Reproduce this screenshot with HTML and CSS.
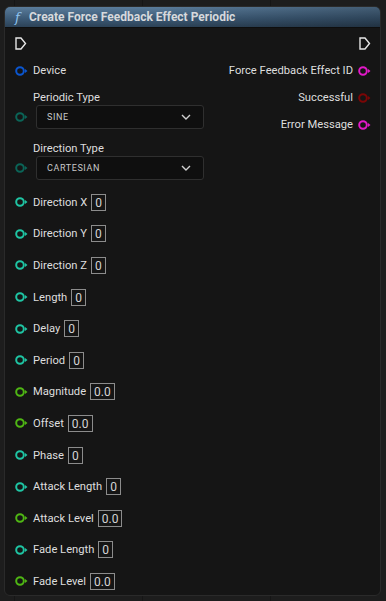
FILE: index.html
```html
<!DOCTYPE html>
<html lang="en">
<head>
    <meta charset="UTF-8">
    <meta name="viewport" content="width=device-width, initial-scale=1.0">
    <title>Create Force Feedback Effect Periodic</title>
    <link rel="stylesheet" href="styles.css">
</head>
<body>
    <div class="node">
        <div class="node-header">
            <span class="fn-icon">f</span>
            <span class="node-title">Create Force Feedback Effect Periodic</span>
        </div>

        <div class="node-body">
            <div class="inputs">
                <div class="pin-row">
                    <svg class="exec" width="12" height="13" viewBox="0 0 12 13"><path d="M1 1 H6 L10.5 6.5 L6 12 H1 Z" fill="none" stroke="#e6e6e6" stroke-width="1.4"/></svg>
                </div>
                <div class="pin-row">
                    <svg class="pin pin-device" width="13" height="10" viewBox="0 0 13 10"><circle cx="5" cy="5" r="3.8" /><path d="M10 3 L12.5 5 L10 7 Z" /></svg>
                    <span class="label">Device</span>
                </div>

                <div class="enum-block">
                    <div class="enum-label">Periodic Type</div>
                    <div class="enum-row">
                        <svg class="pin pin-enum" width="13" height="10" viewBox="0 0 13 10"><circle cx="5" cy="5" r="3.8" /><path d="M10 3 L12.5 5 L10 7 Z" /></svg>
                        <div class="dropdown">
                            <span>SINE</span>
                            <svg width="10" height="6" viewBox="0 0 10 6"><path d="M1 1 L5 5 L9 1" fill="none" stroke="#d0d0d0" stroke-width="1.4"/></svg>
                        </div>
                    </div>
                </div>

                <div class="enum-block second">
                    <div class="enum-label">Direction Type</div>
                    <div class="enum-row">
                        <svg class="pin pin-enum" width="13" height="10" viewBox="0 0 13 10"><circle cx="5" cy="5" r="3.8" /><path d="M10 3 L12.5 5 L10 7 Z" /></svg>
                        <div class="dropdown">
                            <span>CARTESIAN</span>
                            <svg width="10" height="6" viewBox="0 0 10 6"><path d="M1 1 L5 5 L9 1" fill="none" stroke="#d0d0d0" stroke-width="1.4"/></svg>
                        </div>
                    </div>
                </div>

                <div class="value-list" id="valueList"></div>
            </div>

            <div class="outputs">
                <div class="pin-row right">
                    <svg class="exec" width="12" height="13" viewBox="0 0 12 13"><path d="M1 1 H6 L10.5 6.5 L6 12 H1 Z" fill="none" stroke="#e6e6e6" stroke-width="1.4"/></svg>
                </div>
                <div class="pin-row right">
                    <span class="label">Force Feedback Effect ID</span>
                    <svg class="pin pin-string" width="13" height="10" viewBox="0 0 13 10"><circle cx="5" cy="5" r="3.8" /><path d="M10 3 L12.5 5 L10 7 Z" /></svg>
                </div>
                <div class="pin-row right">
                    <span class="label">Successful</span>
                    <svg class="pin pin-bool" width="13" height="10" viewBox="0 0 13 10"><circle cx="5" cy="5" r="3.8" /><path d="M10 3 L12.5 5 L10 7 Z" /></svg>
                </div>
                <div class="pin-row right">
                    <span class="label">Error Message</span>
                    <svg class="pin pin-string" width="13" height="10" viewBox="0 0 13 10"><circle cx="5" cy="5" r="3.8" /><path d="M10 3 L12.5 5 L10 7 Z" /></svg>
                </div>
            </div>
        </div>
    </div>

    <script>
        // Input pins with default values
        const inputs = [
            ['Direction X', '0', 'int'],
            ['Direction Y', '0', 'int'],
            ['Direction Z', '0', 'int'],
            ['Length', '0', 'int'],
            ['Delay', '0', 'int'],
            ['Period', '0', 'int'],
            ['Magnitude', '0.0', 'float'],
            ['Offset', '0.0', 'float'],
            ['Phase', '0', 'int'],
            ['Attack Length', '0', 'int'],
            ['Attack Level', '0.0', 'float'],
            ['Fade Length', '0', 'int'],
            ['Fade Level', '0.0', 'float']
        ];

        const list = document.getElementById('valueList');
        inputs.forEach(([name, value, type]) => {
            const row = document.createElement('div');
            row.className = 'value-row';
            row.innerHTML =
                '<svg class="pin pin-' + type + '" width="13" height="10" viewBox="0 0 13 10">' +
                '<circle cx="5" cy="5" r="3.8" /><path d="M10 3 L12.5 5 L10 7 Z" /></svg>' +
                '<span class="label">' + name + '</span>' +
                '<span class="value-box">' + value + '</span>';
            list.appendChild(row);
        });
    </script>
</body>
</html>
```

FILE: styles.css
```css
body {
    margin: 0;
    width: 386px;
    height: 601px;
    overflow: hidden;
    background-color: #1d1d1d;
    background-image:
        linear-gradient(to right, #161616 1px, transparent 1px);
    background-size: 128px 100%;
    background-position: 14px 0;
    font-family: Roboto, "Noto Sans", sans-serif;
    color: #dcdcdc;
}
.node {
    margin: 6px 0 0 4px;
    width: 377px;
    height: 590px;
    background: #151515;
    border: 1px solid #2a2a2a;
    border-radius: 6px;
    overflow: hidden;
    box-sizing: border-box;
}
.node-header {
    height: 20px;
    display: flex;
    align-items: center;
    padding-left: 10px;
    background:
        linear-gradient(to right, rgba(0, 0, 0, 0) 40%, rgba(0, 0, 0, 0.25) 100%),
        linear-gradient(to bottom, #5a7c9b 0%, #3d5b77 55%, #2c4257 100%);
    border-bottom: 1px solid #0e0e0e;
}
.fn-icon {
    font-family: "DejaVu Serif", serif;
    font-style: italic;
    font-size: 13px;
    color: #8fc3ef;
    width: 14px;
}
.node-title {
    font-weight: bold;
    font-size: 12px;
    color: #d6d9dc;
}
.node-body {
    display: flex;
    justify-content: space-between;
    padding: 2px 9px 0 10px;
}
.inputs {
    display: flex;
    flex-direction: column;
}
.outputs {
    display: flex;
    flex-direction: column;
    align-items: flex-end;
}
.pin-row {
    height: 27px;
    display: flex;
    align-items: center;
    gap: 5px;
}
.label {
    font-size: 11.2px;
    color: #dedede;
}
.exec {
    display: block;
}
.pin {
    display: block;
    flex: none;
}
.pin circle {
    fill: none;
    stroke-width: 2;
}
.pin-device circle { stroke: #0b56d0; }
.pin-device path { fill: #0b56d0; }
.pin-enum circle { stroke: #0b6457; }
.pin-enum path { fill: #0b6457; }
.pin-int circle { stroke: #1fc4a3; }
.pin-int path { fill: #1fc4a3; }
.pin-float circle { stroke: #4fb614; }
.pin-float path { fill: #4fb614; }
.pin-string circle { stroke: #e219c8; }
.pin-string path { fill: #e219c8; }
.pin-bool circle { stroke: #7a0606; }
.pin-bool path { fill: #7a0606; }

.enum-block {
    margin-top: 7px;
}
.enum-block.second {
    margin-top: 13px;
}
.enum-label {
    height: 14px;
    line-height: 14px;
    font-size: 11.2px;
    padding-left: 18px;
    color: #dedede;
}
.enum-row {
    display: flex;
    align-items: center;
    gap: 8px;
}
.dropdown {
    width: 168px;
    height: 24px;
    box-sizing: border-box;
    background: #0f0f0f;
    border: 1px solid #2f2f2f;
    border-radius: 3px;
    display: flex;
    align-items: center;
    justify-content: space-between;
    padding: 0 12px 0 10px;
}
.dropdown span {
    font-size: 9px;
    letter-spacing: 0.6px;
    color: #c8c8c8;
}
.value-list {
    margin-top: 6.5px;
    display: flex;
    flex-direction: column;
}
.value-row {
    height: 31.6px;
    display: flex;
    align-items: center;
    gap: 5px;
}
.value-box {
    margin-left: -1px;
    height: 17px;
    line-height: 16px;
    box-sizing: border-box;
    border: 1px solid #8c8c8c;
    padding: 0 3px;
    font-size: 12px;
    color: #d4d4d4;
}
```
